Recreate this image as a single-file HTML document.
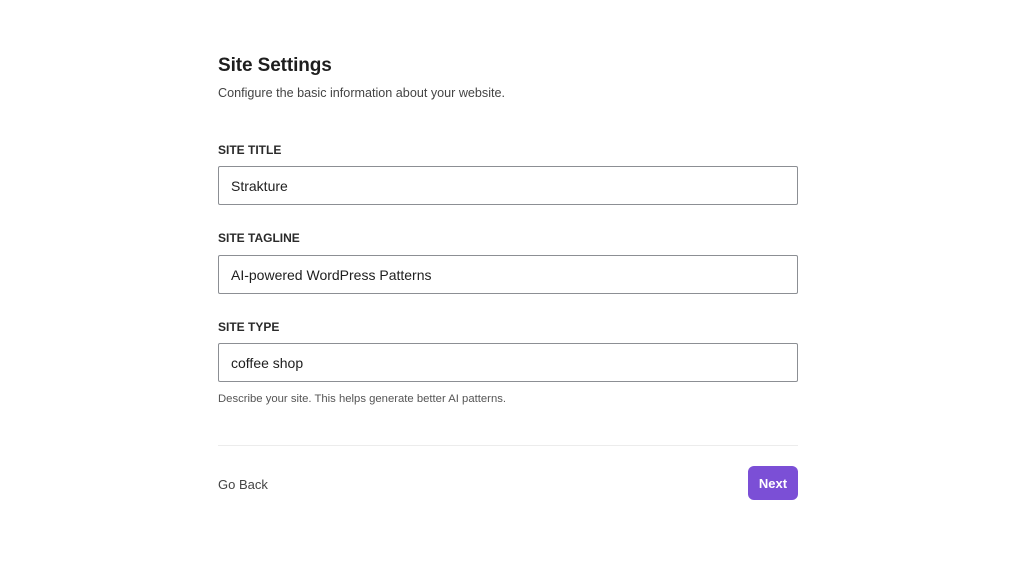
<!DOCTYPE html>
<html><head><meta charset="utf-8"><style>
*{box-sizing:border-box;margin:0;padding:0}
body{width:1024px;height:575px;background:#fff;font-family:"Liberation Sans",sans-serif;position:relative;overflow:hidden}
.a{position:absolute}
h1{position:absolute;left:218px;top:55px;font-size:19px;font-weight:bold;color:#1e1e1e;letter-spacing:-0.1px}
.sub{left:218px;top:86px;font-size:12.6px;color:#444}
.lbl{left:218px;font-size:12px;font-weight:bold;color:#2a2a2a}
.in{left:218px;width:580px;height:39px;border:1px solid #8c8f94;border-radius:2px;font-size:14px;color:#1e1e1e;padding-left:12px;line-height:38px}
.help{left:218px;top:393px;font-size:11.3px;color:#555}
.hr{left:218px;top:445px;width:580px;height:1px;background:#ececec}
.back{left:218px;top:477px;font-size:13px;color:#444}
.btn{left:748px;top:466px;width:50px;height:34px;background:#7b4fd6;border-radius:6px;color:#fff;font-size:13px;font-weight:bold;text-align:center;line-height:36px}
</style></head><body>
<h1>Site Settings</h1>
<div class="a sub">Configure the basic information about your website.</div>
<div class="a lbl" style="top:143px">SITE TITLE</div>
<div class="a in" style="top:166px">Strakture</div>
<div class="a lbl" style="top:231px">SITE TAGLINE</div>
<div class="a in" style="top:255px">AI-powered WordPress Patterns</div>
<div class="a lbl" style="top:320px">SITE TYPE</div>
<div class="a in" style="top:343px">coffee shop</div>
<div class="a help">Describe your site. This helps generate better AI patterns.</div>
<div class="a hr"></div>
<div class="a back">Go Back</div>
<div class="a btn">Next</div>
</body></html>
